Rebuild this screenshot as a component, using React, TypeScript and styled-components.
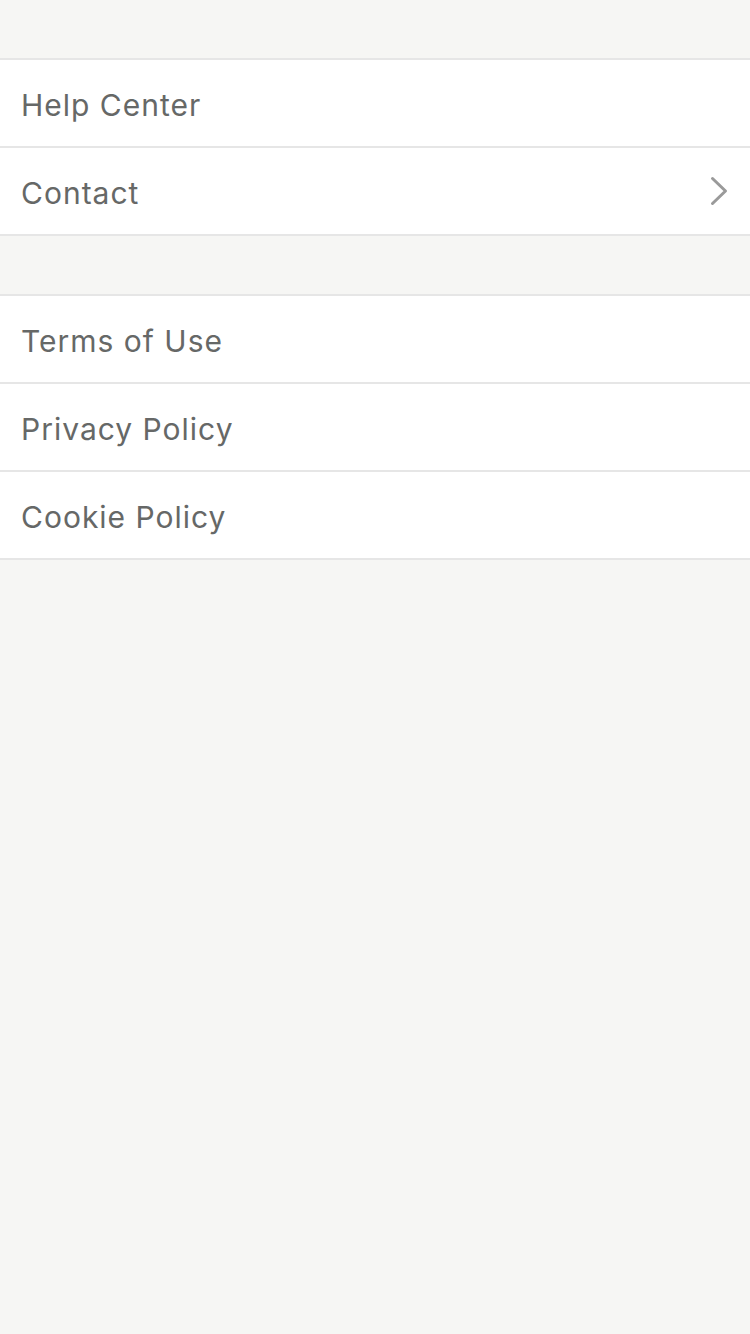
import React from "react";
import styled, { createGlobalStyle } from "styled-components";

const Global = createGlobalStyle`
  html, body { margin: 0; padding: 0; background: #f6f6f4; }
  body { font-family: Inter, "Liberation Sans", Arial, sans-serif; }
`;

const Page = styled.div`
  min-height: 1334px;
  background: #f6f6f4;
  padding-top: 58px;
  display: flex;
  flex-direction: column;
  gap: 58px;
`;

const Section = styled.div`
  background: #fff;
  border-top: 2px solid #e6e6e6;
  display: flex;
  flex-direction: column;
`;

const Row = styled.div`
  box-sizing: border-box;
  height: 88px;
  padding: 4px 21px 0 21px;
  border-bottom: 2px solid #e6e6e6;
  display: flex;
  align-items: center;
  justify-content: space-between;
`;

const Label = styled.span`
  font-family: Inter, "Liberation Sans", Arial, sans-serif;
  font-size: 30px;
  color: #666867;
  letter-spacing: 1px;
`;

const ChevronSvg = styled.svg`
  margin-top: -4px;
  flex-shrink: 0;
`;

const Chevron = () => (
  <ChevronSvg width="20" height="30" viewBox="0 0 20 30">
    <path d="M3.5 2.5 L16.5 15 L3.5 27.5" fill="none" stroke="#9a9a9a" strokeWidth="3" strokeLinecap="round" strokeLinejoin="round" />
  </ChevronSvg>
);

export default function App() {
  return (
    <>
      <Global />
      <Page>
        <Section>
          <Row><Label>Help Center</Label></Row>
          <Row><Label>Contact</Label><Chevron /></Row>
        </Section>
        <Section>
          <Row><Label>Terms of Use</Label></Row>
          <Row><Label>Privacy Policy</Label></Row>
          <Row><Label>Cookie Policy</Label></Row>
        </Section>
      </Page>
    </>
  );
}
